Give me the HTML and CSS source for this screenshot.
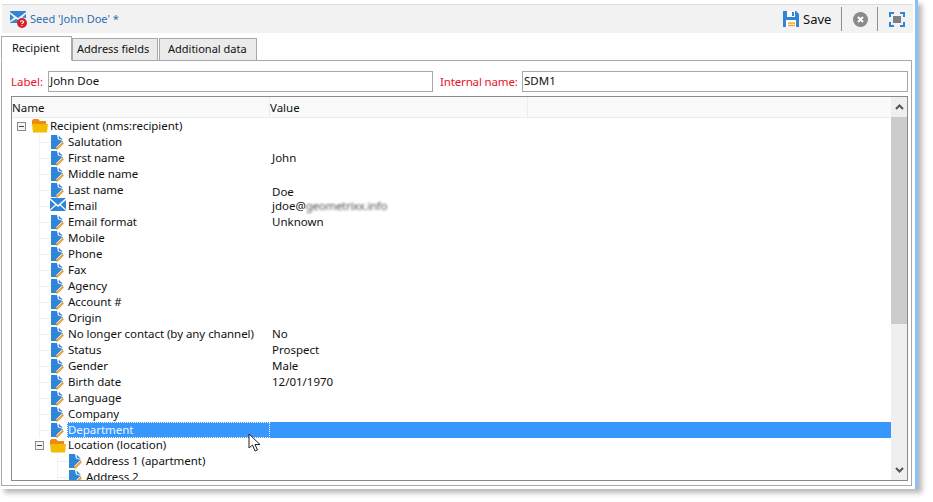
FILE: index.html
```html
<!DOCTYPE html>
<html lang="en">
<head>
<meta charset="utf-8">
<title>Seed 'John Doe'</title>
<link rel="stylesheet" href="styles.css">
</head>
<body>
<svg class="defs" width="0" height="0" aria-hidden="true">
  <symbol id="doc" viewBox="0 0 13 15">
    <path d="M0 0H6L7 4.5L12 6V7.5L5.5 14L0 14Z" fill="#2f86d6"/>
    <path d="M7.5 0.5L12 5L8 4Z" fill="#2f86d6"/>
    <path d="M5.5 12.6L4.8 15L7 14.3L13 8.3L11.4 6.8Z" fill="#f0a030"/>
    <path d="M5.4 12.4L11.4 6.4" stroke="#fff" stroke-width="1"/>
  </symbol>
  <symbol id="folder" viewBox="0 0 16 14">
    <path d="M0 3V1.5L1.5 0H6L8 2H14V5H0Z" fill="#ee8a12"/>
    <path d="M0 5H16L15 13.5H1Z" fill="#f2bd00"/>
  </symbol>
  <symbol id="mail" viewBox="0 0 16 13">
    <path d="M0 0H16L8 7Z" fill="#2f86d6"/>
    <path d="M0 2V11.5L5.2 6.5ZM16 2V11.5L10.8 6.5ZM0 13L6 7.4L8 9L10 7.4L16 13Z" fill="#2f86d6"/>
  </symbol>
  <symbol id="minus" viewBox="0 0 9 9">
    <rect x=".5" y=".5" width="8" height="8" fill="#f4f4f4" stroke="#8a8a8a"/>
    <path d="M2 4.5H7" stroke="#444"/>
  </symbol>
</svg>

<main class="win">
  <header class="bar">
    <svg class="bar-ico" width="17" height="17" viewBox="0 0 17 17">
      <path d="M0 1L8 7L16 1V0H0Z" fill="#2f86d6"/>
      <path d="M0 3V10L4 6.5ZM16 3V7L12 6.5ZM0 12H8L9 9.5L6 8L0 11.5Z" fill="#2f86d6"/>
      <circle cx="12" cy="12" r="5" fill="#d8202c"/>
      <path d="M10.4 10.8C10.6 9.4 13.6 9.4 13.6 11C13.6 12 12 12 12 13M12 14V15" stroke="#fff" stroke-width="1.2" fill="none"/>
    </svg>
    <span class="bar-title">Seed 'John Doe' *</span>
    <div class="bar-tools">
      <svg width="16" height="16" viewBox="0 0 16 16">
        <path d="M0 0H13L16 3V16H0Z" fill="#2f86d6"/>
        <rect x="4" y="0" width="8" height="6" fill="#fff"/>
        <rect x="9" y="1" width="2" height="4" fill="#2f86d6"/>
        <rect x="3" y="9" width="10" height="7" fill="#fff"/>
        <path d="M5 12H12M5 14.5H12" stroke="#f0a030" stroke-width="1.4"/>
      </svg>
      <span class="save">Save</span>
      <span class="vsep"></span>
      <svg class="close" width="15" height="15" viewBox="0 0 15 15">
        <circle cx="7.5" cy="7.5" r="7.5" fill="#8a8a8a"/>
        <path d="M5 5L10 10M10 5L5 10" stroke="#fff" stroke-width="2"/>
      </svg>
      <span class="vsep"></span>
      <svg class="fit" width="16" height="15" viewBox="0 0 16 15">
        <path d="M1 5V1H5M11 1H15V5M1 10V14H5M11 14H15V10" fill="none" stroke="#2f86d6" stroke-width="2"/>
        <rect x="4" y="4" width="8" height="7" fill="#808080"/>
      </svg>
    </div>
  </header>

  <nav class="tabs">
    <span class="tab active">Recipient</span>
    <span class="tab">Address fields</span>
    <span class="tab">Additional data</span>
  </nav>

  <section class="panel">
    <div class="fields">
      <label class="lbl">Label:</label>
      <div class="inp inp-a">John Doe</div>
      <label class="lbl lbl-b">Internal name:</label>
      <div class="inp inp-b">SDM1</div>
    </div>

    <div class="tree">
      <div class="thead">
        <span class="th th-name">Name</span>
        <span class="th th-value">Value</span>
        <span class="th th-rest"></span>
      </div>
      <div class="tmain">
        <div class="tbody">
          <div class="row"><div class="name"><svg class="exp"><use href="#minus"/></svg><svg class="fld"><use href="#folder"/></svg><span class="lab">Recipient (nms:recipient)</span></div><div class="val"></div></div>
          <div class="row"><div class="name"><i class="g1"></i><svg class="ico"><use href="#doc"/></svg><span class="lab">Salutation</span></div><div class="val"></div></div>
          <div class="row"><div class="name"><i class="g1"></i><svg class="ico"><use href="#doc"/></svg><span class="lab">First name</span></div><div class="val">John</div></div>
          <div class="row"><div class="name"><i class="g1"></i><svg class="ico"><use href="#doc"/></svg><span class="lab">Middle name</span></div><div class="val"></div></div>
          <div class="row"><div class="name"><i class="g1"></i><svg class="ico"><use href="#doc"/></svg><span class="lab">Last name</span></div><div class="val low">Doe</div></div>
          <div class="row"><div class="name"><i class="g1m"></i><svg class="ico-m"><use href="#mail"/></svg><span class="lab">Email</span></div><div class="val">jdoe@<span class="blur">geometrixx.info</span></div></div>
          <div class="row"><div class="name"><i class="g1"></i><svg class="ico"><use href="#doc"/></svg><span class="lab">Email format</span></div><div class="val">Unknown</div></div>
          <div class="row"><div class="name"><i class="g1"></i><svg class="ico"><use href="#doc"/></svg><span class="lab">Mobile</span></div><div class="val"></div></div>
          <div class="row"><div class="name"><i class="g1"></i><svg class="ico"><use href="#doc"/></svg><span class="lab">Phone</span></div><div class="val"></div></div>
          <div class="row"><div class="name"><i class="g1"></i><svg class="ico"><use href="#doc"/></svg><span class="lab">Fax</span></div><div class="val"></div></div>
          <div class="row"><div class="name"><i class="g1"></i><svg class="ico"><use href="#doc"/></svg><span class="lab">Agency</span></div><div class="val"></div></div>
          <div class="row"><div class="name"><i class="g1"></i><svg class="ico"><use href="#doc"/></svg><span class="lab">Account #</span></div><div class="val"></div></div>
          <div class="row"><div class="name"><i class="g1"></i><svg class="ico"><use href="#doc"/></svg><span class="lab">Origin</span></div><div class="val"></div></div>
          <div class="row"><div class="name"><i class="g1"></i><svg class="ico"><use href="#doc"/></svg><span class="lab">No longer contact (by any channel)</span></div><div class="val">No</div></div>
          <div class="row"><div class="name"><i class="g1"></i><svg class="ico"><use href="#doc"/></svg><span class="lab">Status</span></div><div class="val">Prospect</div></div>
          <div class="row"><div class="name"><i class="g1"></i><svg class="ico"><use href="#doc"/></svg><span class="lab">Gender</span></div><div class="val">Male</div></div>
          <div class="row"><div class="name"><i class="g1"></i><svg class="ico"><use href="#doc"/></svg><span class="lab">Birth date</span></div><div class="val">12/01/1970</div></div>
          <div class="row"><div class="name"><i class="g1"></i><svg class="ico"><use href="#doc"/></svg><span class="lab">Language</span></div><div class="val"></div></div>
          <div class="row"><div class="name"><i class="g1"></i><svg class="ico"><use href="#doc"/></svg><span class="lab">Company</span></div><div class="val"></div></div>
          <div class="row sel"><div class="name"><i class="g1"></i><svg class="ico"><use href="#doc"/></svg><span class="lab">Department</span></div><div class="val"></div></div>
          <div class="row row-tight"><div class="name"><svg class="exp exp-2"><use href="#minus"/></svg><svg class="fld"><use href="#folder"/></svg><span class="lab">Location (location)</span></div><div class="val"></div></div>
          <div class="row"><div class="name"><i class="g2"></i><svg class="ico"><use href="#doc"/></svg><span class="lab">Address 1 (apartment)</span></div><div class="val"></div></div>
          <div class="row"><div class="name"><i class="g2"></i><svg class="ico"><use href="#doc"/></svg><span class="lab">Address 2</span></div><div class="val"></div></div>
        </div>
        <div class="sb">
          <span class="sb-btn"><svg width="9" height="6" viewBox="0 0 9 6"><path d="M1 5L4.5 1.5L8 5" fill="none" stroke="#555" stroke-width="2"/></svg></span>
          <div class="sb-track"><div class="sb-thumb"></div></div>
          <span class="sb-btn"><svg width="9" height="6" viewBox="0 0 9 6"><path d="M1 1L4.5 4.5L8 1" fill="none" stroke="#555" stroke-width="2"/></svg></span>
        </div>
      </div>
    </div>
  </section>
  <svg class="cursor" width="14" height="20" viewBox="0 0 14 20">
    <path d="M1 1V15L4.5 12L7 18L9.5 17L7 11.5H12Z" fill="#fff" stroke="#222" stroke-width="1"/>
  </svg>
</main>
</body>
</html>
```
FILE: styles.css
```css
* { box-sizing: border-box; }
html, body { margin: 0; padding: 0; background: #fff; }
body {
  width: 933px;
  height: 502px;
  overflow: hidden;
  font-family: "Noto Sans", "Open Sans", sans-serif;
  font-size: 11.5px;
  line-height: 16px;
  color: #111;
}
.defs { position: absolute; }
.win {
  position: relative;
  width: 918px;
  height: 489px;
  background: #fff;
  border-right: 3px solid #8cc1f5;
  box-shadow: 4px 4px 5px rgba(0,0,0,.28);
  padding-top: 4px;
  display: flex;
  flex-direction: column;
}
.bar {
  margin: 0 2px;
  height: 29px;
  flex: none;
  background: #f2f2f2;
  border-top: 1px solid #dcdcdc;
  display: flex;
  align-items: center;
  padding-left: 8px;
}
.bar-ico { flex: none; margin-right: 3px; margin-top: 1px; }
.bar-title { color: #2c6fb3; font-size: 11px; }
.bar-tools { margin-left: auto; display: flex; align-items: center; }
.save { font-size: 13px; margin: 0 10px 0 4px; width: 28px; white-space: nowrap; }
.vsep { width: 1px; height: 24px; background: #8f8f8f; }
.close { margin: 0 9px 0 11px; }
.fit { margin: 0 8px 0 11px; }
.tabs {
  margin: 3px 0 -1px 1px;
  height: 25px;
  flex: none;
  display: flex;
  align-items: flex-end;
  position: relative;
  z-index: 1;
  font-size: 11px;
}
.tab {
  height: 23px;
  margin-right: 1px;
  padding: 0 0 0 4px;
  line-height: 20px;
  background: #ebebeb;
  border: 1px solid #a8a8a8;
  white-space: nowrap;
}
.tab.active {
  height: 25px;
  width: 71px;
  margin-right: 0;
  padding: 1px 0 0 10px;
  background: #fff;
  border-bottom-color: #fff;
}
.tab:nth-child(2) { width: 86px; }
.tab:nth-child(3) { width: 98px; padding-left: 8px; }
.panel {
  margin-left: 1px;
  width: 911px;
  height: 426px;
  flex: none;
  border: 1px solid #a8a8a8;
  padding: 10px 3px 0 9px;
}
.fields { display: flex; align-items: center; height: 21px; }
.lbl { color: #e8102a; width: 37px; flex: none; }
.lbl-b { width: 82px; margin-left: 7px; letter-spacing: -.15px; }
.inp {
  height: 21px;
  border: 1px solid #a8a8a8;
  padding-left: 1px;
  line-height: 18px;
}
.inp-a { width: 385px; }
.inp-b { width: 386px; }
.tree {
  margin-top: 4px;
  height: 385px;
  width: 897px;
  border: 1px solid #8a8a8a;
  overflow: hidden;
  display: flex;
  flex-direction: column;
}
.thead {
  flex: none;
  height: 21px;
  display: flex;
  background: #fafafa;
  border-bottom: 1px solid #e6eef7;
  margin-right: 16px;
}
.th { line-height: 22px; border-right: 1px solid #e8eef5; }
.th-name { width: 258px; }
.th-value { width: 258px; }
.th-rest { flex: 1; border-right: 0; }
.tmain { flex: 1; display: flex; min-height: 0; margin-top: -21px; }
.tbody { flex: 1; margin-top: 21px; overflow: hidden; }
.row { height: 16px; display: grid; grid-template-columns: 258px 1fr; }
.row-tight { height: 15px; }
.row-tight .lab { margin-top: -2px; }
.row-tight .fld, .row-tight .exp { margin-top: -1px; }
.name { display: flex; align-items: center; height: 16px; min-width: 0; }
.lab { flex: 1; padding-left: 1px; height: 16px; white-space: nowrap; letter-spacing: -.05px; }
.val { padding-left: 2px; height: 16px; }
.low { padding-top: 2px; height: 18px; }
.exp { width: 9px; height: 9px; margin-left: 5px; flex: none; }
.exp-2 { margin-left: 23px; }
.fld { width: 16px; height: 14px; margin-left: 6px; margin-right: 1px; flex: none; }
.g1, .g1m, .g2 {
  display: block;
  height: 16px;
  flex: none;
  background-repeat: no-repeat;
}
.g1, .g1m {
  width: 39px;
  background-image: linear-gradient(#eee, #eee), linear-gradient(#f3f3f3, #f3f3f3);
  background-size: 12px 1px, 1px 16px;
  background-position: 27px 8px, 27px 0;
}
.g1m { width: 38px; background-size: 11px 1px, 1px 16px; }
.g2 {
  width: 57px;
  background-image: linear-gradient(#eee, #eee), linear-gradient(#f3f3f3, #f3f3f3);
  background-size: 12px 1px, 1px 16px;
  background-position: 45px 8px, 45px 0;
}
.ico { width: 13px; height: 15px; flex: none; margin-right: 3px; }
.ico-m { width: 16px; height: 13px; flex: none; margin-right: 1px; margin-top: -3px; }
.sel .lab {
  background: #3797fc;
  color: #eaf4ff;
  outline: 1px dotted #fff;
  outline-offset: -1px;
}
.sel .val { background: #3797fc; }
.blur { filter: blur(1.3px); color: #555; letter-spacing: -.3px; }
.sb {
  flex: none;
  width: 16px;
  background: #efefef;
  display: flex;
  flex-direction: column;
}
.sb-btn {
  flex: none;
  height: 20px;
  display: flex;
  align-items: center;
  justify-content: center;
}
.sb-track { flex: 1; }
.sb-thumb { height: 207px; background: #cbcbcb; }
.cursor { position: absolute; left: 248px; top: 433px; }
```
